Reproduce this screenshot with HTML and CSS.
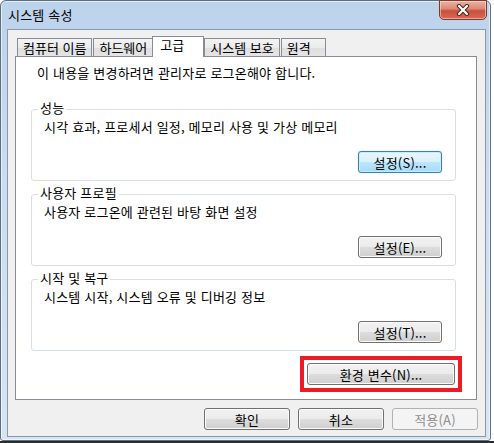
FILE: index.html
```html
<!DOCTYPE html>
<html lang="ko">
<head>
    <meta charset="UTF-8">
    <meta name="viewport" content="width=device-width, initial-scale=1.0">
    <title>시스템 속성</title>
    <link rel="stylesheet" href="styles.css">
</head>
<body>
    <div class="window">
        <div class="titlebar">
            <span class="title">시스템 속성</span>
            <button class="close" aria-label="닫기">
                <svg width="14" height="12" viewBox="0 0 14 12">
                    <path d="M3 2 L11 10 M11 2 L3 10" stroke="#4a2620" stroke-width="4.2" stroke-linecap="round"/>
                    <path d="M3 2 L11 10 M11 2 L3 10" stroke="#ffffff" stroke-width="2.2" stroke-linecap="round"/>
                </svg>
            </button>
        </div>
        <div class="client">
            <div class="tabs">
                <div class="tab">컴퓨터 이름</div>
                <div class="tab">하드웨어</div>
                <div class="tab active">고급</div>
                <div class="tab">시스템 보호</div>
                <div class="tab">원격</div>
            </div>
            <div class="panel">
                <p class="notice">이 내용을 변경하려면 관리자로 로그온해야 합니다.</p>

                <fieldset class="group">
                    <legend>성능</legend>
                    <p>시각 효과, 프로세서 일정, 메모리 사용 및 가상 메모리</p>
                    <div class="group-actions">
                        <button class="btn default">설정(S)...</button>
                    </div>
                </fieldset>

                <fieldset class="group">
                    <legend>사용자 프로필</legend>
                    <p>사용자 로그온에 관련된 바탕 화면 설정</p>
                    <div class="group-actions">
                        <button class="btn">설정(E)...</button>
                    </div>
                </fieldset>

                <fieldset class="group">
                    <legend>시작 및 복구</legend>
                    <p>시스템 시작, 시스템 오류 및 디버깅 정보</p>
                    <div class="group-actions">
                        <button class="btn">설정(T)...</button>
                    </div>
                </fieldset>

                <div class="env-row">
                    <div class="highlight">
                        <button class="btn wide">환경 변수(N)...</button>
                    </div>
                </div>
            </div>
            <div class="dialog-buttons">
                <button class="btn">확인</button>
                <button class="btn">취소</button>
                <button class="btn" disabled>적용(A)</button>
            </div>
        </div>
    </div>
</body>
</html>
```
FILE: styles.css
```css
body {
    margin: 0;
    width: 494px;
    height: 443px;
    overflow: hidden;
    font-family: "Noto Sans CJK KR", "Noto Sans", sans-serif;
    font-size: 13px;
    line-height: 15px;
    letter-spacing: 0.2px;
    color: #000;
    background: linear-gradient(to bottom, #ffffff 441px, #2b2d30 441px);
}
.window {
    box-sizing: border-box;
    width: 491px;
    height: 441px;
    padding: 0 4px 4px 6px;
    border: 1px solid #5f6f82;
    border-radius: 6px 6px 3px 3px;
    background: linear-gradient(to bottom, #bcd3ec 0%, #c9dcf1 40%, #d6e5f6 100%);
    box-shadow: inset 0 0 0 1px rgba(255, 255, 255, 0.55);
}
.titlebar {
    display: flex;
    justify-content: space-between;
    align-items: flex-start;
    height: 28px;
}
.title {
    padding: 6px 0 0 1px;
}
.close {
    display: flex;
    align-items: center;
    justify-content: center;
    width: 48px;
    height: 20px;
    margin: -1px -1px 0 0;
    padding: 0;
    border: 1px solid #7a3a2e;
    border-radius: 0 0 5px 5px;
    background: linear-gradient(to bottom, #eab2a4 0%, #dc8a78 42%, #c8503c 55%, #d46a55 100%);
    box-shadow: inset 0 0 0 1px rgba(255, 225, 215, 0.55);
}
.client {
    box-sizing: border-box;
    height: 408px;
    padding: 0 8px 0 7px;
    border: 1px solid #8a98a8;
    background-color: #f0f0f0;
}
.tabs {
    display: flex;
    align-items: flex-end;
    height: 26px;
    padding-left: 2px;
    box-sizing: border-box;
}
.tab {
    box-sizing: border-box;
    min-width: 45px;
    height: 18px;
    padding: 1px 5px 0;
    letter-spacing: 0;
    border: 1px solid #898c95;
    border-bottom: none;
    background: linear-gradient(to bottom, #f3f3f3 0%, #ebebeb 50%, #dedede 51%, #e5e5e5 100%);
    white-space: nowrap;
}
.tab + .tab {
    margin-left: 1px;
}
.tab.active {
    position: relative;
    z-index: 1;
    min-width: 52px;
    height: 21px;
    margin: 0 0 -1px -1px;
    padding: 0 7px;
    background: #fff;
}
.tab.active + .tab {
    margin-left: 0;
}
.panel {
    box-sizing: border-box;
    height: 344px;
    padding: 8px 0 0 15px;
    border: 1px solid #898c95;
    background-color: #fff;
}
.notice {
    margin: 0 0 21px 6px;
}
.group {
    box-sizing: border-box;
    width: 425px;
    height: 80px;
    margin: 0 0 5px;
    padding: 1px 13px 0 12px;
    border: 1px solid #d5dfe5;
    border-radius: 3px;
    min-width: 0;
}
.group legend {
    margin-left: -6px;
    padding: 0 2px 4px;
    line-height: 13px;
}
.group p {
    margin: 0;
}
.group-actions {
    display: flex;
    justify-content: flex-end;
    margin-top: 17px;
}
.btn {
    box-sizing: border-box;
    width: 84px;
    height: 22px;
    padding: 0;
    font-family: inherit;
    font-size: 13px;
    letter-spacing: 0.2px;
    color: #000;
    border: 1px solid #707070;
    border-radius: 3px;
    background: linear-gradient(to bottom, #f2f2f2 0%, #ebebeb 50%, #dddddd 51%, #cfcfcf 100%);
    box-shadow: inset 0 0 0 1px #fbfbfb;
}
.btn.default {
    border-color: #3c7fb1;
    background: linear-gradient(to bottom, #eaf6fd 0%, #d9f0fc 50%, #bee6fd 51%, #a7d9f5 100%);
    box-shadow: inset 0 0 0 1px #c9ecfc, 0 0 1px #6cc3f0;
}
.btn:disabled {
    color: #8d8d8d;
    border-color: #adb2b5;
    background: #f4f4f4;
    box-shadow: none;
}
.btn.wide {
    width: 148px;
}
.env-row {
    display: flex;
    justify-content: flex-end;
    margin-top: 1px;
    padding-right: 14px;
}
.highlight {
    padding: 3px;
    border: 4px solid #ed1c24;
}
.dialog-buttons {
    display: flex;
    justify-content: flex-end;
    gap: 8px;
    margin-top: 8px;
    margin-right: -1px;
}
.dialog-buttons .btn {
    width: 86px;
}
```
